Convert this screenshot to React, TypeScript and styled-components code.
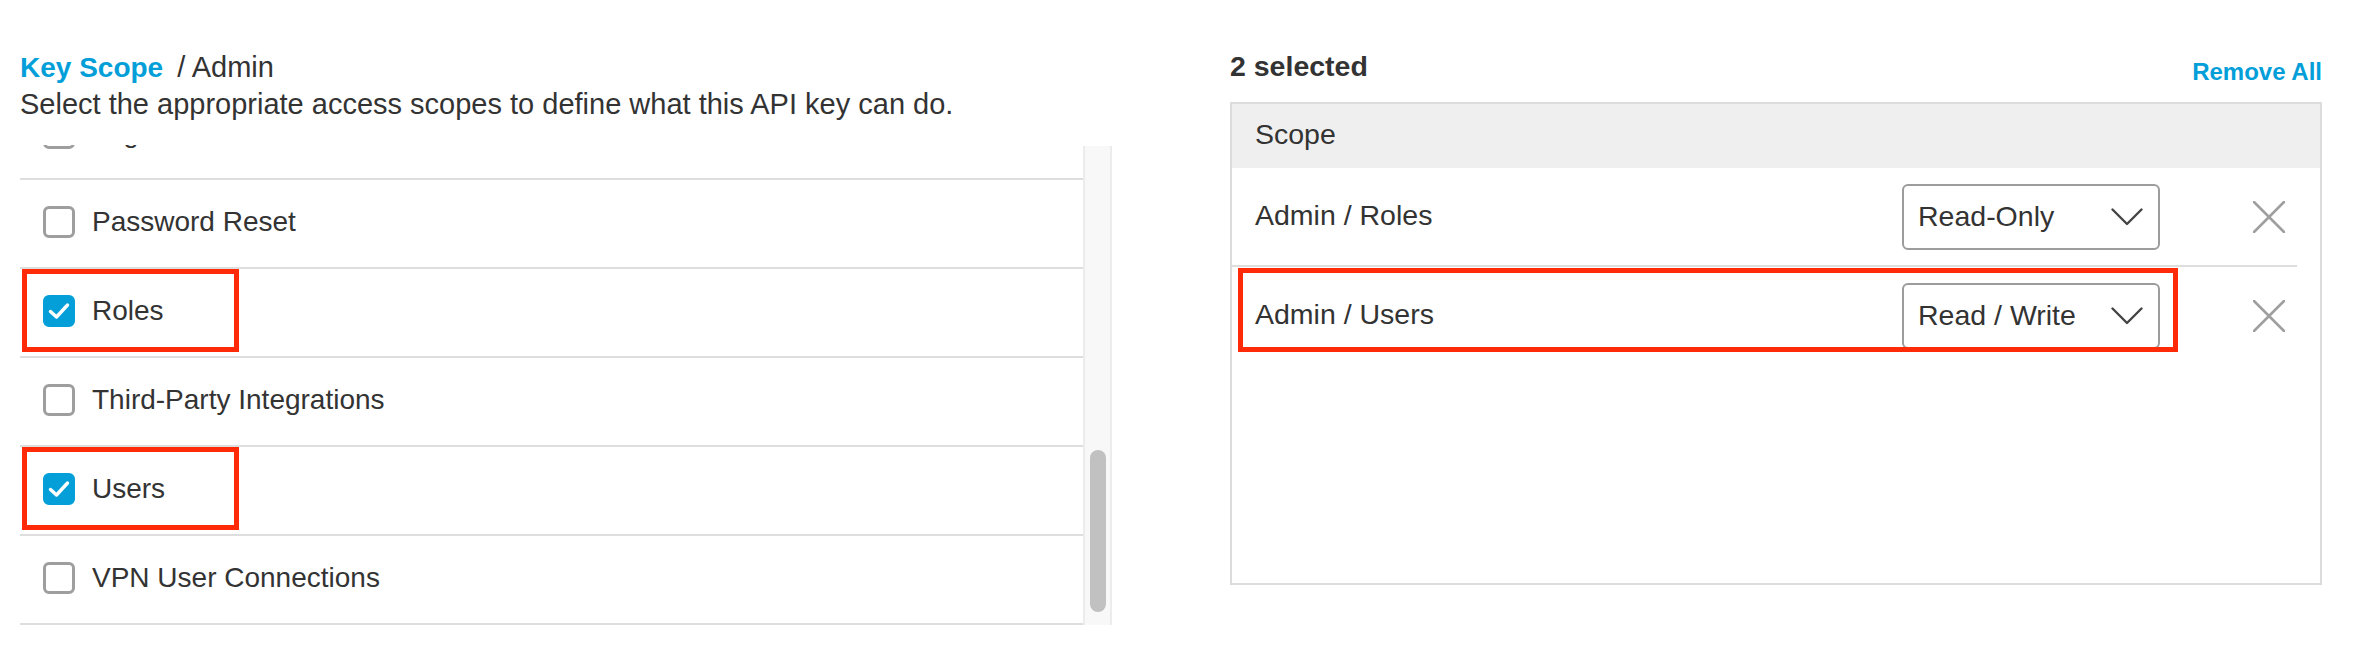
import React, { useLayoutEffect, useRef } from "react";
import styled, { createGlobalStyle } from "styled-components";

const GlobalStyle = createGlobalStyle`
  html, body { margin: 0; padding: 0; background: #fff; }
  body {
    font-family: "Liberation Sans", Arial, Helvetica, sans-serif;
    color: #333;
    -webkit-font-smoothing: antialiased;
  }
  * { box-sizing: border-box; }
`;

const BLUE = "#049fd9";
const RED = "#ff2a08";

const Page = styled.div`
  display: grid;
  grid-template-columns: 1092px 1092px;
  column-gap: 118px;
  padding: 0 36px 0 20px;
  width: 2358px;
`;

const Column = styled.section`
  display: flex;
  flex-direction: column;
`;

const Title = styled.h2`
  margin: 49px 0 0;
  font-size: 29px;
  line-height: 36px;
  font-weight: 400;
  color: #333;
`;

const TitleLink = styled.span`
  color: ${BLUE};
  font-weight: 700;
  font-size: 28px;
  margin-right: 14px;
`;

const Description = styled.p`
  margin: 0;
  font-size: 29px;
  line-height: 36px;
  color: #333;
`;

const ListFrame = styled.div`
  margin-top: 23px;
  height: 480px;
  display: flex;
`;

const ListViewport = styled.div`
  flex: 1;
  overflow: hidden;
`;

const ItemRow = styled.div`
  position: relative;
  height: 89px;
  border-bottom: 2px solid #dedede;
  display: flex;
  align-items: center;
  padding: 0 0 4px 23px;
  gap: 17px;
  font-size: 28px;
  color: #333;
`;

const Box = styled.span<{ $checked: boolean }>`
  width: 32px;
  height: 32px;
  flex: none;
  border-radius: 6px;
  border: 3px solid ${(p) => (p.$checked ? BLUE : "#9e9e9e")};
  background: ${(p) => (p.$checked ? BLUE : "#fff")};
  display: flex;
  align-items: center;
  justify-content: center;
`;

const Highlight = styled.div<{ $l: number; $t: number; $w: number; $h: number }>`
  position: absolute;
  left: ${(p) => p.$l}px;
  top: ${(p) => p.$t}px;
  width: ${(p) => p.$w}px;
  height: ${(p) => p.$h}px;
  border: 5px solid ${RED};
  pointer-events: none;
`;

const Track = styled.div`
  width: 29px;
  flex: none;
  background: #f8f8f8;
  border-left: 2px solid #ececec;
  border-right: 2px solid #ececec;
  display: flex;
  flex-direction: column;
  justify-content: flex-end;
  align-items: center;
  padding-bottom: 14px;
  margin-top: 1px;
  margin-bottom: -1px;
`;

const Thumb = styled.div<{ $h: number }>`
  width: 16px;
  height: ${(p) => p.$h}px;
  border-radius: 8px;
  background: #c1c1c1;
`;

const RightHeader = styled.div`
  display: flex;
  justify-content: space-between;
  align-items: flex-start;
  padding-top: 48px;
  height: 86px;
`;

const Count = styled.h3`
  margin: 0;
  font-size: 28.5px;
  line-height: 36px;
  font-weight: 700;
  color: #333;
`;

const RemoveAll = styled.button`
  margin-top: 10px;
  padding: 0;
  border: 0;
  background: none;
  font-family: inherit;
  font-size: 24px;
  line-height: 28px;
  font-weight: 700;
  color: ${BLUE};
  cursor: pointer;
`;

const TableBox = styled.div`
  margin-top: 16px;
  height: 483px;
  border: 2px solid #dcdcdc;
  display: flex;
  flex-direction: column;
`;

const TableHead = styled.div`
  height: 64px;
  background: #efefef;
  padding: 12px 0 0 23px;
  font-size: 28.5px;
  line-height: 36px;
  color: #333;
`;

const ScopeRow = styled.div`
  position: relative;
  height: 97px;
  margin-right: 23px;
  display: flex;
  align-items: center;
  padding: 0 12px 0 23px;
  font-size: 28.5px;
  color: #333;
  & + & {
    border-top: 2px solid #dedede;
    height: 99px;
  }
`;

const ScopeName = styled.span`
  flex: 1;
  margin-top: -3px;
`;

const Select = styled.div`
  width: 258px;
  height: 66px;
  border: 2px solid #9c9c9c;
  border-radius: 6px;
  display: flex;
  align-items: center;
  justify-content: space-between;
  padding: 0 15px 0 14px;
  font-size: 28.5px;
  color: #333;
  background: #fff;
`;

const RemoveBtn = styled.button`
  margin-left: 93px;
  width: 32px;
  height: 32px;
  padding: 0;
  border: 0;
  background: none;
  display: flex;
  cursor: pointer;
`;

const Check = () => (
  <svg width="22" height="18" viewBox="0 0 22 18" fill="none">
    <path d="M2.5 9.5 L8.5 15 L19.5 3" stroke="#fff" strokeWidth="3.4" strokeLinecap="round" strokeLinejoin="round" />
  </svg>
);

const Chevron = () => (
  <svg width="32" height="18" viewBox="0 0 32 18" fill="none">
    <path d="M1.5 1.5 L16 16 L30.5 1.5" stroke="#444" strokeWidth="2.4" strokeLinecap="round" strokeLinejoin="round" />
  </svg>
);

const CloseX = () => (
  <svg width="32" height="32" viewBox="0 0 32 32" fill="none">
    <path d="M1 1 L31 31 M31 1 L1 31" stroke="#9f9f9f" strokeWidth="2.6" strokeLinecap="round" />
  </svg>
);

const items: { label: string; checked?: boolean; mark?: boolean }[] = [
  { label: "Logs" },
  { label: "Password Reset" },
  { label: "Roles", checked: true, mark: true },
  { label: "Third-Party Integrations" },
  { label: "Users", checked: true, mark: true },
  { label: "VPN User Connections" },
];

const selected = [
  { name: "Admin / Roles", access: "Read-Only" },
  { name: "Admin / Users", access: "Read / Write", mark: true },
];

export default function App() {
  const listRef = useRef<HTMLDivElement>(null);

  useLayoutEffect(() => {
    const el = listRef.current;
    if (el) el.scrollTop = el.scrollHeight;
  }, []);

  return (
    <>
      <GlobalStyle />
      <Page>
        <Column>
          <Title>
            <TitleLink>Key Scope</TitleLink>/ Admin
          </Title>
          <Description>Select the appropriate access scopes to define what this API key can do.</Description>
          <ListFrame>
            <ListViewport ref={listRef}>
              {items.map((it) => (
                <ItemRow key={it.label}>
                  <Box $checked={!!it.checked}>{it.checked && <Check />}</Box>
                  <span>{it.label}</span>
                  {it.mark && <Highlight $l={2} $t={0} $w={217} $h={83} />}
                </ItemRow>
              ))}
            </ListViewport>
            <Track>
              <Thumb $h={162} />
            </Track>
          </ListFrame>
        </Column>
        <Column>
          <RightHeader>
            <Count>2 selected</Count>
            <RemoveAll>Remove All</RemoveAll>
          </RightHeader>
          <TableBox>
            <TableHead>Scope</TableHead>
            {selected.map((s) => (
              <ScopeRow key={s.name}>
                <ScopeName>{s.name}</ScopeName>
                <Select>
                  <span>{s.access}</span>
                  <Chevron />
                </Select>
                <RemoveBtn aria-label="Remove">
                  <CloseX />
                </RemoveBtn>
                {s.mark && <Highlight $l={6} $t={1} $w={940} $h={84} />}
              </ScopeRow>
            ))}
          </TableBox>
        </Column>
      </Page>
    </>
  );
}
